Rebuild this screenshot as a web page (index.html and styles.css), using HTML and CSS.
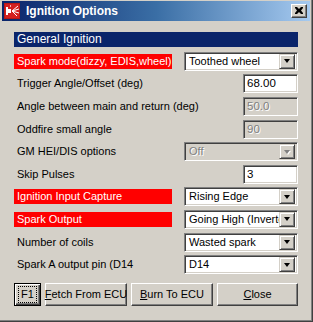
FILE: index.html
```html
<!DOCTYPE html>
<html>
<head>
<meta charset="utf-8">
<link rel="stylesheet" href="styles.css">
</head>
<body>
<div class="window">
  <div class="titlebar">
    <svg class="appicon" width="16" height="16" viewBox="0 0 16 16">
      <rect x="0" y="0" width="16" height="16" fill="#b81818"/>
      <rect x="1" y="1" width="14" height="14" fill="#d42020"/>
      <rect x="2" y="4" width="2" height="8" fill="#fff"/>
      <rect x="4" y="6" width="3" height="4" fill="#fff"/>
      <path d="M8 8 L14 3 M8 8 L15 6 M8 8 L15 10 M8 8 L13 13" stroke="#fff" stroke-width="1" fill="none"/>
      <rect x="6" y="2" width="1" height="2" fill="#f8b0b0"/>
    </svg>
    <span class="title">Ignition Options</span>
    <div class="closebtn"><svg width="8" height="7" viewBox="0 0 8 7"><path d="M0 0h2l2 2 2-2h2v1l-2 2.5 2 2.5v1h-2l-2-2-2 2h-2v-1l2-2.5-2-2.5z" fill="#000"/></svg></div>
  </div>
  <div class="client">
    <div class="section">General Ignition</div>
    <div class="rows">
      <div class="row">
        <div class="label red">Spark mode(dizzy, EDIS,wheel)</div>
        <div class="combo"><span class="val">Toothed wheel</span><span class="drop"><i></i></span></div>
      </div>
      <div class="row">
        <div class="label">Trigger Angle/Offset (deg)</div>
        <div class="field">68.00</div>
      </div>
      <div class="row">
        <div class="label">Angle between main and return (deg)</div>
        <div class="field disabled">50.0</div>
      </div>
      <div class="row">
        <div class="label">Oddfire small angle</div>
        <div class="field disabled">90</div>
      </div>
      <div class="row">
        <div class="label">GM HEI/DIS options</div>
        <div class="combo disabled"><span class="val">Off</span><span class="drop"><i></i></span></div>
      </div>
      <div class="row">
        <div class="label">Skip Pulses</div>
        <div class="field">3</div>
      </div>
      <div class="row">
        <div class="label red">Ignition Input Capture</div>
        <div class="combo"><span class="val">Rising Edge</span><span class="drop"><i></i></span></div>
      </div>
      <div class="row">
        <div class="label red">Spark Output</div>
        <div class="combo"><span class="val">Going High (Inverted)</span><span class="drop"><i></i></span></div>
      </div>
      <div class="row">
        <div class="label">Number of coils</div>
        <div class="combo"><span class="val">Wasted spark</span><span class="drop"><i></i></span></div>
      </div>
      <div class="row">
        <div class="label">Spark A output pin (D14</div>
        <div class="combo"><span class="val">D14</span><span class="drop"><i></i></span></div>
      </div>
    </div>
    <div class="buttons">
      <div class="btn default f1"><span class="focus">F1</span></div>
      <div class="btn fetch"><span><u>F</u>etch From ECU</span></div>
      <div class="btn burn"><span><u>B</u>urn To ECU</span></div>
      <div class="btn close"><span><u>C</u>lose</span></div>
    </div>
  </div>
</div>
</body>
</html>
```

FILE: styles.css
```css
* { box-sizing: border-box; }
html, body { margin: 0; padding: 0; background: #d4d0c8; overflow: hidden; }
body { font-family: "Liberation Sans", Arial, sans-serif; font-size: 11px; color: #000; }

.window {
  width: 313px;
  height: 322px;
  background: #d4d0c8;
  border-right: 1px solid #404040;
  border-bottom: 1px solid #404040;
  padding: 1px 2px 2px 2px;
  position: relative;
}
.window::after {
  content: "";
  position: absolute;
  right: 0; bottom: 0; left: 0; top: 0;
  border-right: 1px solid #808080;
  border-bottom: 1px solid #808080;
  pointer-events: none;
}

.titlebar {
  height: 20px;
  background: linear-gradient(to right, #0a246a 0%, #3a6ea5 50%, #a6caf0 100%);
  display: flex;
  align-items: center;
  padding-left: 2px;
  padding-right: 3px;
}
.appicon { flex: none; display: block; }
.title {
  color: #fff;
  font-weight: bold;
  font-size: 12px;
  margin-left: 6px;
}
.closebtn {
  margin-left: auto;
  width: 16px;
  height: 14px;
  background: #d4d0c8;
  border-top: 1px solid #fff;
  border-left: 1px solid #fff;
  border-right: 1px solid #404040;
  border-bottom: 1px solid #404040;
  box-shadow: inset -1px -1px 0 #808080;
  display: flex;
  align-items: center;
  justify-content: center;
  padding-bottom: 1px;
}
.closebtn svg { display: block; }

.client { padding: 11px 12px 0 12px; }

.section {
  height: 15px;
  background: #0a246a;
  color: #fff;
  line-height: 15px;
  padding-left: 3px;
  font-size: 12px;
}

.rows { margin-top: 3px; }
.row {
  height: 22.6px;
  display: flex;
  align-items: center;
  justify-content: space-between;
}
.label {
  flex: none;
  width: 158px;
  height: 15px;
  line-height: 15px;
  padding-left: 3px;
  white-space: nowrap;
  overflow: visible;
}
.label.red { background: #ff0000; color: #fff; overflow: hidden; }

.combo {
  width: 114px;
  height: 19px;
  background: #fff;
  border-top: 1px solid #808080;
  border-left: 1px solid #808080;
  border-right: 1px solid #fff;
  border-bottom: 1px solid #fff;
  box-shadow: inset 1px 1px 0 #404040, inset -1px -1px 0 #d4d0c8;
  display: flex;
  align-items: center;
  padding: 2px;
  overflow: hidden;
}
.combo .val {
  flex: 1;
  min-width: 0;
  padding-left: 2px;
  white-space: nowrap;
  overflow: hidden;
  text-overflow: clip;
  line-height: 15px;
}
.combo .drop {
  flex: none;
  width: 16px;
  height: 15px;
  background: #d4d0c8;
  border-top: 1px solid #d4d0c8;
  border-left: 1px solid #d4d0c8;
  border-right: 1px solid #404040;
  border-bottom: 1px solid #404040;
  box-shadow: inset 1px 1px 0 #fff, inset -1px -1px 0 #808080;
  display: flex;
  align-items: center;
  justify-content: center;
}
.combo .drop i {
  display: block;
  width: 0; height: 0;
  border-left: 3.5px solid transparent;
  border-right: 3.5px solid transparent;
  border-top: 4px solid #000;
}
.combo.disabled { background: #d4d0c8; color: #808080; }
.combo.disabled .val { text-shadow: 1px 1px 0 #fff; }
.combo.disabled .drop i { border-top-color: #808080; filter: drop-shadow(1px 1px 0 #fff); }

.field {
  width: 55px;
  height: 19px;
  background: #fff;
  border-top: 1px solid #808080;
  border-left: 1px solid #808080;
  border-right: 1px solid #fff;
  border-bottom: 1px solid #fff;
  box-shadow: inset 1px 1px 0 #404040, inset -1px -1px 0 #d4d0c8;
  padding-left: 3px;
  line-height: 17px;
  font-size: 11.5px;
}
.field.disabled { background: #d4d0c8; color: #808080; text-shadow: 1px 1px 0 #fff; }

.buttons {
  display: flex;
  margin-top: 7px;
  gap: 4px;
}
.btn {
  height: 23px;
  background: #d4d0c8;
  border-top: 1px solid #fff;
  border-left: 1px solid #fff;
  border-right: 1px solid #404040;
  border-bottom: 1px solid #404040;
  box-shadow: inset -1px -1px 0 #808080;
  display: flex;
  align-items: center;
  justify-content: center;
  white-space: nowrap;
}
.btn u { text-decoration: underline; text-underline-offset: 1px; }
.btn.f1 { width: 27px; border: 1px solid #000; box-shadow: inset 1px 1px 0 #fff, inset -1px -1px 0 #404040, inset -2px -2px 0 #808080; }
.btn.f1 .focus { outline: 1px dotted #000; outline-offset: 1px; padding: 0 1px; line-height: 13px; }
.btn.fetch { width: 82px; }
.btn.burn { width: 82px; }
.btn.close { width: 81px; }
```
